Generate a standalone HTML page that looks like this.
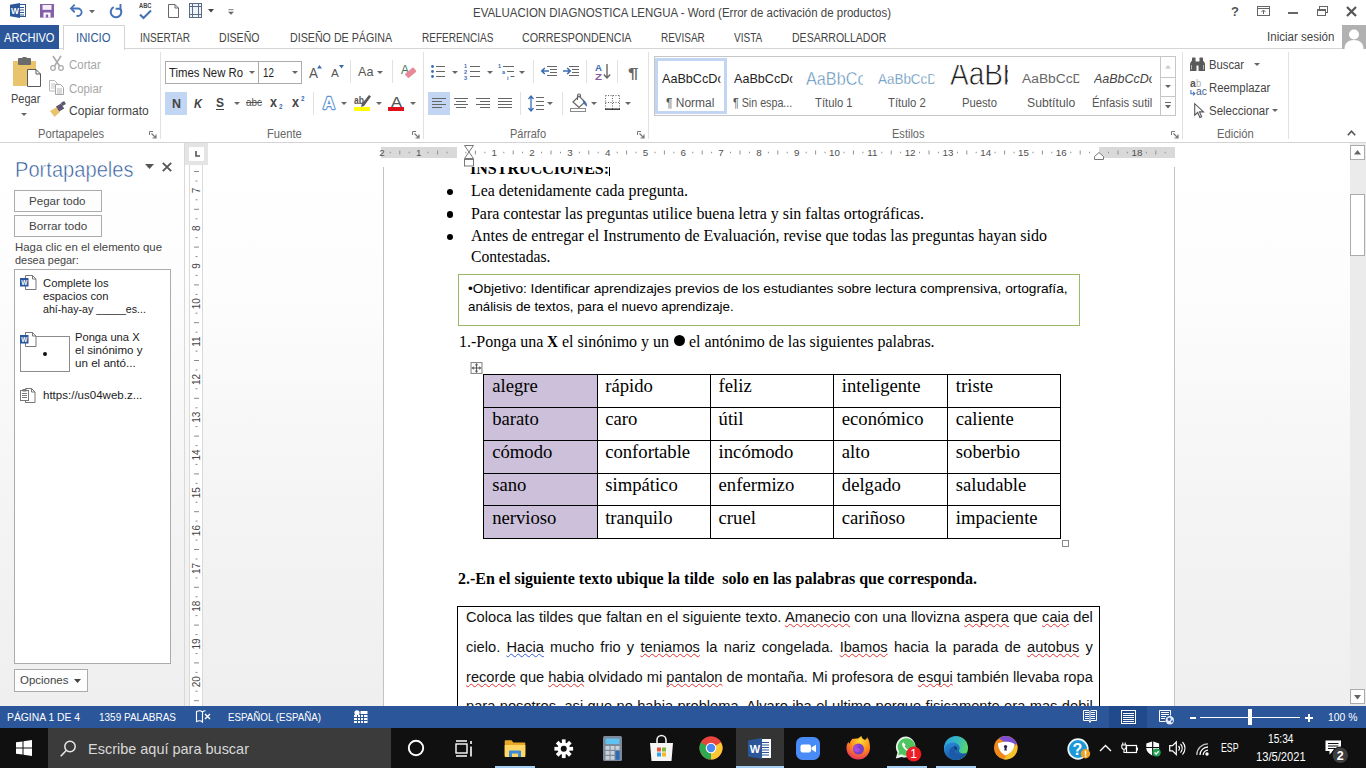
<!DOCTYPE html>
<html lang="es"><head><meta charset="utf-8"><title>EVALUACION DIAGNOSTICA LENGUA - Word</title><style>
html,body{margin:0;padding:0}
body{width:1366px;height:768px;overflow:hidden;background:#fff;position:relative;font-family:"Liberation Sans","DejaVu Sans",sans-serif}
.a{position:absolute;box-sizing:border-box}
.t{white-space:pre;display:block;transform-origin:0 0}
svg{overflow:visible}
</style></head><body>
<div class="a" style="left:0px;top:143px;width:1366px;height:563px;background:linear-gradient(#ffffff 0%,#fdfdfd 25%,#f3f3f3 70%,#efefef 100%);"></div>
<div class="a" style="left:0px;top:142px;width:1366px;height:1px;background:#d4d4d4;"></div>
<span class="a t" id="t1" style="left:473px;top:6.84px;font: 400 12px/12px 'Liberation Sans','DejaVu Sans',sans-serif;color:#444;transform:scaleX(0.9564);">EVALUACION DIAGNOSTICA LENGUA - Word (Error de activación de productos)</span>
<div class="a" style="left:0px;top:25px;width:59px;height:24px;background:#2b579a;"></div>
<span class="a t" id="t2" style="left:4px;top:31.84px;font: 400 12px/12px 'Liberation Sans','DejaVu Sans',sans-serif;color:#fff;transform:scaleX(0.9234);">ARCHIVO</span>
<div class="a" style="left:59px;top:48px;width:1307px;height:1px;background:#d4d4d4;"></div>
<div class="a" style="left:63px;top:25px;width:62px;height:25px;background:#fff;border:1px solid #d4d4d4;border-bottom:none;"></div>
<span class="a t" id="t3" style="left:76px;top:31.84px;font: 400 12px/12px 'Liberation Sans','DejaVu Sans',sans-serif;color:#2b579a;transform:scaleX(0.9408);">INICIO</span>
<span class="a t" id="t4" style="left:140px;top:31.84px;font: 400 12px/12px 'Liberation Sans','DejaVu Sans',sans-serif;color:#444;transform:scaleX(0.8392);">INSERTAR</span>
<span class="a t" id="t5" style="left:219px;top:31.84px;font: 400 12px/12px 'Liberation Sans','DejaVu Sans',sans-serif;color:#444;transform:scaleX(0.8801);">DISEÑO</span>
<span class="a t" id="t6" style="left:289.5px;top:31.84px;font: 400 12px/12px 'Liberation Sans','DejaVu Sans',sans-serif;color:#444;transform:scaleX(0.8893);">DISEÑO DE PÁGINA</span>
<span class="a t" id="t7" style="left:421.5px;top:31.84px;font: 400 12px/12px 'Liberation Sans','DejaVu Sans',sans-serif;color:#444;transform:scaleX(0.8376);">REFERENCIAS</span>
<span class="a t" id="t8" style="left:522px;top:31.84px;font: 400 12px/12px 'Liberation Sans','DejaVu Sans',sans-serif;color:#444;transform:scaleX(0.8925);">CORRESPONDENCIA</span>
<span class="a t" id="t9" style="left:661px;top:31.84px;font: 400 12px/12px 'Liberation Sans','DejaVu Sans',sans-serif;color:#444;transform:scaleX(0.8313);">REVISAR</span>
<span class="a t" id="t10" style="left:734.4px;top:31.84px;font: 400 12px/12px 'Liberation Sans','DejaVu Sans',sans-serif;color:#444;transform:scaleX(0.8374);">VISTA</span>
<span class="a t" id="t11" style="left:792.4px;top:31.84px;font: 400 12px/12px 'Liberation Sans','DejaVu Sans',sans-serif;color:#444;transform:scaleX(0.8782);">DESARROLLADOR</span>
<span class="a t" id="t12" style="left:1267px;top:30.84px;font: 400 12px/12px 'Liberation Sans','DejaVu Sans',sans-serif;color:#444;transform:scaleX(0.9624);">Iniciar sesión</span>
<div class="a" style="left:1342px;top:25px;width:24px;height:24px;background:#b1b1b1;"></div>
<svg class="a" style="left:1342px;top:25px;" width="24" height="24" viewBox="0 0 24 24"><circle cx="12" cy="9.5" r="5" fill="#fff"/><path d="M2.5 24c0-6 4-9 9.5-9s9.500 3 9.500 9z" fill="#fff"/></svg>
<div class="a" style="left:0px;top:706px;width:1366px;height:22px;background:#2b579a;"></div>
<div class="a" style="left:0px;top:728px;width:1366px;height:40px;background:#101010;"></div>
<div class="a" style="left:48px;top:728px;width:343px;height:40px;background:#3b3b3b;"></div>
<svg class="a" style="left:10px;top:3px;" width="16" height="15" viewBox="0 0 16 15"><rect x="8" y="1.500" width="7.500" height="12" fill="#fff" stroke="#2b579a" stroke-width="1"/><path d="M10 4.500h4M10 7h4M10 9.500h4M10 12h4" stroke="#2b579a" stroke-width="1"/><path d="M0 1.800l10-1.800v15l-10-1.800z" fill="#2b579a"/><text x="5" y="11" font-family="Liberation Sans,sans-serif" font-weight="700" font-size="8.500" fill="#fff" text-anchor="middle">W</text></svg>
<svg class="a" style="left:40px;top:4px;" width="14" height="14" viewBox="0 0 14 14"><rect x="0" y="0" width="14" height="13.600" fill="#8560a8"/><rect x="2.500" y="1" width="9" height="4.800" fill="#f6eef9"/><rect x="3.500" y="8.500" width="7" height="5.100" fill="#fff"/><rect x="5.800" y="10.500" width="2.400" height="3.100" fill="#8560a8"/></svg>
<svg class="a" style="left:69px;top:4px;" width="15" height="13" viewBox="0 0 15 14.500"><path d="M1.500 5h7.500a4.200 4.200 0 0 1 0 8.400h-1.500" fill="none" stroke="#4673b7" stroke-width="2"/><path d="M5.500 0.800L1.300 5l4.200 4.200" fill="none" stroke="#4673b7" stroke-width="2"/></svg>
<svg class="a" style="left:88.5px;top:9.5px;" width="6" height="4" viewBox="0 0 6 4"><path d="M0 0h6l-3 3.200z" fill="#666"/></svg>
<svg class="a" style="left:109px;top:4px;" width="14" height="14" viewBox="0 0 14 14"><path d="M10.700 4.200A5.300 5.300 0 1 1 4.800 3.200" fill="none" stroke="#4673b7" stroke-width="2"/><path d="M6.600 4.700h4.900v-4.700" fill="none" stroke="#4673b7" stroke-width="1.900"/></svg>
<span class="a t" id="t13" style="left:139px;top:2.70px;font: 700 6.5px/6.5px 'Liberation Sans','DejaVu Sans',sans-serif;color:#444;transform:scaleX(0.8869);">ABC</span>
<svg class="a" style="left:139px;top:9.5px;" width="13" height="9" viewBox="0 0 13 9"><path d="M1 4.500l3.500 3.500l7.500-7.500" fill="none" stroke="#4673b7" stroke-width="2.100"/></svg>
<svg class="a" style="left:168px;top:4px;" width="11" height="14" viewBox="0 0 11 14"><path d="M0.500 0.500h6.500l3.500 3.500v9.500h-10z" fill="#fff" stroke="#666" stroke-width="1"/><path d="M7 0.500v3.500h3.500" fill="none" stroke="#666" stroke-width="1"/></svg>
<svg class="a" style="left:189px;top:3px;" width="13" height="15" viewBox="0 0 13 15"><rect x="0.500" y="0.500" width="12" height="14" fill="#eef4fa" stroke="#5a6b85" stroke-width="1"/><path d="M0.500 3.500h12M0.500 11.500h12M3.500 0.500v14M9.500 0.500v14" stroke="#5a6b85" stroke-width="1" fill="none"/></svg>
<svg class="a" style="left:208px;top:9px;" width="6" height="4" viewBox="0 0 6 4"><path d="M0 0h6l-3 3.500z" fill="#444"/></svg>
<svg class="a" style="left:227.5px;top:8.5px;" width="6" height="6.5" viewBox="0 0 7 7"><path d="M0.500 0.500h6" stroke="#666" stroke-width="1"/><path d="M0 3h7l-3.500 3.500z" fill="#666"/></svg>
<span class="a t" id="t14" style="left:1231px;top:4.50px;font: 700 13px/13px 'Liberation Sans','DejaVu Sans',sans-serif;color:#555;">?</span>
<svg class="a" style="left:1257px;top:6px;" width="13" height="10" viewBox="0 0 13 10"><rect x="0.500" y="0.500" width="12" height="9" fill="none" stroke="#666" stroke-width="1"/><path d="M0.500 2.500h12" stroke="#666"/><path d="M6.500 8V4.500M4.500 6l2-2l2 2" fill="none" stroke="#666" stroke-width="1"/></svg>
<div class="a" style="left:1288px;top:12px;width:10px;height:2px;background:#666;"></div>
<svg class="a" style="left:1317px;top:6px;" width="11" height="10" viewBox="0 0 11 10"><rect x="2.500" y="0.500" width="8" height="6" fill="none" stroke="#666"/><rect x="0.500" y="3.500" width="8" height="6" fill="#fff" stroke="#666"/><path d="M0.500 4.500h8" stroke="#666"/></svg>
<svg class="a" style="left:1346px;top:6px;" width="11" height="11" viewBox="0 0 11 11"><path d="M1 1l9 9M10 1l-9 9" stroke="#555" stroke-width="2.200"/></svg>
<svg class="a" style="left:12px;top:57px;" width="30" height="31" viewBox="0 0 30 31"><rect x="1" y="4" width="23" height="25" fill="#e9c46c"/><rect x="6" y="1" width="13" height="7" rx="1" fill="#6b6b6b"/><rect x="10.500" y="0" width="4" height="3" fill="#6b6b6b"/><path d="M15.500 12.500h8.500l4.500 4.500v12.500h-13z" fill="#fff" stroke="#5a5a5a" stroke-width="1"/><path d="M24 12.500v4.500h4.500" fill="none" stroke="#5a5a5a"/></svg>
<span class="a t" id="t15" style="left:10.5px;top:92.72px;font: 400 12.5px/12.5px 'Liberation Sans','DejaVu Sans',sans-serif;color:#444;transform:scaleX(0.8783);">Pegar</span>
<svg class="a" style="left:21px;top:113px;" width="6" height="4" viewBox="0 0 6 4"><path d="M0 0h6l-3 3z" fill="#666"/></svg>
<svg class="a" style="left:50px;top:56px;" width="14" height="15" viewBox="0 0 14 15"><path d="M3 0l6.500 10M11 0l-6.500 10" stroke="#ababab" stroke-width="1.600" fill="none"/><circle cx="3" cy="12" r="2.300" fill="none" stroke="#ababab" stroke-width="1.300"/><circle cx="11" cy="12" r="2.300" fill="none" stroke="#ababab" stroke-width="1.300"/></svg>
<span class="a t" id="t16" style="left:69px;top:59.32px;font: 400 12.5px/12.5px 'Liberation Sans','DejaVu Sans',sans-serif;color:#a6a6a6;transform:scaleX(0.9155);">Cortar</span>
<svg class="a" style="left:49px;top:80px;" width="16" height="15" viewBox="0 0 16 15"><path d="M0.500 0.500h5l2.500 2.500v8h-7.500z" fill="#fff" stroke="#b5b5b5"/><path d="M2 4h4M2 6h4M2 8h4" stroke="#c4c4c4"/><path d="M6.500 4.500h5l3 3v7h-8z" fill="#fff" stroke="#a6a6a6"/><path d="M8 9h5M8 11h5M8 13h5" stroke="#b5b5b5"/></svg>
<span class="a t" id="t17" style="left:69px;top:82.52px;font: 400 12.5px/12.5px 'Liberation Sans','DejaVu Sans',sans-serif;color:#a6a6a6;transform:scaleX(0.9096);">Copiar</span>
<svg class="a" style="left:50px;top:102px;" width="16" height="15" viewBox="0 0 16 15"><path d="M0 9l7-4l3 5l-5.500 5z" fill="#e9c46c"/><path d="M6 4.500l5-3l3.200 5l-5 3z" fill="#5c5470"/><rect x="11.500" y="0" width="4" height="3.500" transform="rotate(-30 13 2)" fill="#5c5470"/></svg>
<span class="a t" id="t18" style="left:69px;top:105.02px;font: 400 12.5px/12.5px 'Liberation Sans','DejaVu Sans',sans-serif;color:#444;transform:scaleX(0.9639);">Copiar formato</span>
<span class="a t" id="t19" style="left:38.3px;top:128.44px;font: 400 12px/12px 'Liberation Sans','DejaVu Sans',sans-serif;color:#666;transform:scaleX(0.9347);">Portapapeles</span>
<svg class="a" style="left:149px;top:131px;" width="8" height="8" viewBox="0 0 8 8"><path d="M0.500 4V0.500H4" fill="none" stroke="#777"/><path d="M2.500 2.500L7 7M7 3.500V7H3.500" fill="none" stroke="#777" stroke-width="1.200"/></svg>
<div class="a" style="left:160px;top:52px;width:1px;height:87px;background:#e1e1e1;"></div>
<div class="a" style="left:165px;top:61px;width:94px;height:23px;background:#fff;border:1px solid #ababab;"></div>
<div class="a" style="left:258px;top:61px;width:44px;height:23px;background:#fff;border:1px solid #ababab;"></div>
<span class="a t" id="t20" style="left:168.7px;top:66.52px;font: 400 12.5px/12.5px 'Liberation Sans','DejaVu Sans',sans-serif;color:#222;transform:scaleX(0.9080);">Times New Ro</span>
<svg class="a" style="left:248.5px;top:71px;" width="6" height="4" viewBox="0 0 6 4"><path d="M0 0h6l-3 3z" fill="#666"/></svg>
<span class="a t" id="t21" style="left:262.7px;top:66.52px;font: 400 12.5px/12.5px 'Liberation Sans','DejaVu Sans',sans-serif;color:#222;transform:scaleX(0.7838);">12</span>
<svg class="a" style="left:291.5px;top:71px;" width="6" height="4" viewBox="0 0 6 4"><path d="M0 0h6l-3 3z" fill="#666"/></svg>
<span class="a t" id="t22" style="left:308.5px;top:65.10px;font: 400 15px/15px 'Liberation Sans','DejaVu Sans',sans-serif;color:#555;transform:scaleX(0.8986);">A</span>
<svg class="a" style="left:317px;top:64.5px;" width="5" height="3.5" viewBox="0 0 5 3.500"><path d="M0 3.500h5l-2.500-3.500z" fill="#3b6cb3"/></svg>
<span class="a t" id="t23" style="left:331px;top:68.07px;font: 400 11.5px/11.5px 'Liberation Sans','DejaVu Sans',sans-serif;color:#555;transform:scaleX(1.0167);">A</span>
<svg class="a" style="left:338.5px;top:64.5px;" width="5" height="3.5" viewBox="0 0 5 3.500"><path d="M0 0h5l-2.500 3.500z" fill="#3b6cb3"/></svg>
<div class="a" style="left:350px;top:60px;width:1px;height:23px;background:#e1e1e1;"></div>
<span class="a t" id="t24" style="left:358px;top:65.30px;font: 400 13px/13px 'Liberation Sans','DejaVu Sans',sans-serif;color:#555;transform:scaleX(0.9682);">Aa</span>
<svg class="a" style="left:377px;top:71px;" width="6" height="4" viewBox="0 0 6 4"><path d="M0 0h6l-3 3z" fill="#666"/></svg>
<div class="a" style="left:392px;top:60px;width:1px;height:23px;background:#e1e1e1;"></div>
<span class="a t" id="t25" style="left:401px;top:63.84px;font: 400 12px/12px 'Liberation Sans','DejaVu Sans',sans-serif;color:#3d7a5a;transform:scaleX(0.9981);">A</span>
<svg class="a" style="left:404px;top:66px;" width="13" height="13" viewBox="0 0 13 13"><rect x="1" y="4" width="11" height="5.500" rx="1" transform="rotate(-40 6.500 6.500)" fill="#e8899a"/></svg>
<div class="a" style="left:165px;top:92px;width:22px;height:23px;background:#c2d5f2;"></div>
<span class="a t" id="t26" style="left:171.5px;top:96.50px;font: 700 13px/13px 'Liberation Sans','DejaVu Sans',sans-serif;color:#444;transform:scaleX(0.9584);">N</span>
<span class="a t" id="t27" style="left:193.5px;top:96.50px;font:italic 700 13px/13px 'Liberation Sans','DejaVu Sans',sans-serif;color:#444;transform:scaleX(0.8519);">K</span>
<span class="a t" id="t28" style="left:216px;top:95.50px;font: 700 13px/13px 'Liberation Sans','DejaVu Sans',sans-serif;color:#444;transform:scaleX(0.9225);">S</span>
<div class="a" style="left:216px;top:108.5px;width:8px;height:1.5px;background:#444;"></div>
<svg class="a" style="left:233.5px;top:102px;" width="6" height="4" viewBox="0 0 6 4"><path d="M0 0h6l-3 3z" fill="#666"/></svg>
<span class="a t" id="t29" style="left:246px;top:97.27px;font: 400 11.5px/11.5px 'Liberation Sans','DejaVu Sans',sans-serif;color:#555;transform:scaleX(0.8627);text-decoration:line-through;">abc</span>
<span class="a t" id="t30" style="left:270px;top:95.45px;font: 700 14px/14px 'Liberation Sans','DejaVu Sans',sans-serif;color:#444;transform:scaleX(0.8978);">x</span>
<span class="a t" id="t31" style="left:278.5px;top:104.00px;font: 700 6.5px/6.5px 'Liberation Sans','DejaVu Sans',sans-serif;color:#3b6cb3;transform:scaleX(0.9655);">2</span>
<span class="a t" id="t32" style="left:292px;top:95.45px;font: 700 14px/14px 'Liberation Sans','DejaVu Sans',sans-serif;color:#444;transform:scaleX(0.8978);">x</span>
<span class="a t" id="t33" style="left:300.5px;top:95.50px;font: 700 6.5px/6.5px 'Liberation Sans','DejaVu Sans',sans-serif;color:#3b6cb3;transform:scaleX(0.9655);">2</span>
<div class="a" style="left:313px;top:92px;width:1px;height:23px;background:#e1e1e1;"></div>
<svg class="a" style="left:320px;top:93px;" width="18" height="19" viewBox="0 0 18 19"><text x="9" y="15.800" font-family="Liberation Sans,sans-serif" font-size="16.500" font-weight="700" text-anchor="middle" fill="#fff" stroke="#5f94d6" stroke-width="2.300" stroke-linejoin="round" paint-order="stroke">A</text></svg>
<svg class="a" style="left:340.5px;top:102px;" width="6" height="4" viewBox="0 0 6 4"><path d="M0 0h6l-3 3z" fill="#666"/></svg>
<span class="a t" id="t34" style="left:354px;top:95.11px;font: 700 10.5px/10.5px 'Liberation Sans','DejaVu Sans',sans-serif;color:#555;transform:scaleX(0.8153);">ab</span>
<svg class="a" style="left:360px;top:95px;" width="11" height="12" viewBox="0 0 11 12"><path d="M9 0l2 1.500l-7 9.500l-3 1l0.800-3z" fill="#5a5a5a"/></svg>
<div class="a" style="left:354px;top:107px;width:16px;height:4px;background:#ffff00;"></div>
<svg class="a" style="left:375.5px;top:102px;" width="6" height="4" viewBox="0 0 6 4"><path d="M0 0h6l-3 3z" fill="#666"/></svg>
<span class="a t" id="t35" style="left:390.5px;top:94.65px;font: 400 14px/14px 'Liberation Sans','DejaVu Sans',sans-serif;color:#555;transform:scaleX(1.1773);">A</span>
<div class="a" style="left:388px;top:107px;width:16px;height:4px;background:#e0101a;"></div>
<svg class="a" style="left:409.5px;top:102px;" width="6" height="4" viewBox="0 0 6 4"><path d="M0 0h6l-3 3z" fill="#666"/></svg>
<span class="a t" id="t36" style="left:266.6px;top:128.44px;font: 400 12px/12px 'Liberation Sans','DejaVu Sans',sans-serif;color:#666;transform:scaleX(0.9315);">Fuente</span>
<svg class="a" style="left:412px;top:131px;" width="8" height="8" viewBox="0 0 8 8"><path d="M0.500 4V0.500H4" fill="none" stroke="#777"/><path d="M2.500 2.500L7 7M7 3.500V7H3.500" fill="none" stroke="#777" stroke-width="1.200"/></svg>
<div class="a" style="left:423px;top:52px;width:1px;height:87px;background:#e1e1e1;"></div>
<svg class="a" style="left:431px;top:64px;" width="15" height="15" viewBox="0 0 15 15"><circle cx="1.500" cy="2.500" r="1.400" fill="#3b6cb3"/><circle cx="1.500" cy="7.500" r="1.400" fill="#3b6cb3"/><circle cx="1.500" cy="12.500" r="1.400" fill="#3b6cb3"/><path d="M5 2.500h9M5 7.500h9M5 12.500h9" stroke="#666" stroke-width="1"/></svg>
<svg class="a" style="left:452px;top:71px;" width="6" height="4" viewBox="0 0 6 4"><path d="M0 0h6l-3 3z" fill="#666"/></svg>
<svg class="a" style="left:464px;top:63px;" width="17" height="17" viewBox="0 0 17 17"><text x="0" y="5" font-size="5.500" font-weight="700" font-family="Liberation Sans,sans-serif" fill="#3b6cb3">1</text><text x="0" y="10.800" font-size="5.500" font-weight="700" font-family="Liberation Sans,sans-serif" fill="#3b6cb3">2</text><text x="0" y="16.500" font-size="5.500" font-weight="700" font-family="Liberation Sans,sans-serif" fill="#3b6cb3">3</text><path d="M6 3.500h10M6 8.500h10M6 13.500h10" stroke="#666" stroke-width="1"/></svg>
<svg class="a" style="left:486.5px;top:71px;" width="6" height="4" viewBox="0 0 6 4"><path d="M0 0h6l-3 3z" fill="#666"/></svg>
<svg class="a" style="left:498px;top:63px;" width="18" height="17" viewBox="0 0 18 17"><text x="0" y="5" font-size="5.500" font-weight="700" font-family="Liberation Sans,sans-serif" fill="#3b6cb3">1</text><text x="4" y="10.800" font-size="5.500" font-weight="700" font-family="Liberation Sans,sans-serif" fill="#3b6cb3">a</text><text x="9" y="16.500" font-size="5.500" font-weight="700" font-family="Liberation Sans,sans-serif" fill="#3b6cb3">i</text><path d="M5 3.500h11M9 8.500h7M12.500 13.500h4" stroke="#666" stroke-width="1"/></svg>
<svg class="a" style="left:518.5px;top:71px;" width="6" height="4" viewBox="0 0 6 4"><path d="M0 0h6l-3 3z" fill="#666"/></svg>
<div class="a" style="left:533px;top:60px;width:1px;height:23px;background:#e1e1e1;"></div>
<svg class="a" style="left:541px;top:65px;" width="16" height="13" viewBox="0 0 16 13"><path d="M6 1.500h10M9 4.500h7M9 7.500h7M6 10.500h10" stroke="#666" stroke-width="1"/><path d="M8 6H1M3.800 3l-3 3l3 3" fill="none" stroke="#3b6cb3" stroke-width="1.600"/></svg>
<svg class="a" style="left:563px;top:65px;" width="16" height="13" viewBox="0 0 16 13"><path d="M6 1.500h10M9 4.500h7M9 7.500h7M6 10.500h10" stroke="#666" stroke-width="1"/><path d="M0 6H7M4.200 3l3 3l-3 3" fill="none" stroke="#3b6cb3" stroke-width="1.600"/></svg>
<div class="a" style="left:586px;top:60px;width:1px;height:23px;background:#e1e1e1;"></div>
<span class="a t" id="t37" style="left:595px;top:63.46px;font: 700 9.5px/9.5px 'Liberation Sans','DejaVu Sans',sans-serif;color:#3b6cb3;transform:scaleX(1.0182);">A</span>
<span class="a t" id="t38" style="left:595px;top:71.96px;font: 700 9.5px/9.5px 'Liberation Sans','DejaVu Sans',sans-serif;color:#8a5a9a;transform:scaleX(1.2043);">Z</span>
<svg class="a" style="left:603px;top:64px;" width="8" height="16" viewBox="0 0 8 16"><path d="M4 0v14M0.800 10.500l3.200 3.500l3.200-3.500" fill="none" stroke="#666" stroke-width="1.400"/></svg>
<div class="a" style="left:617px;top:60px;width:1px;height:23px;background:#e1e1e1;"></div>
<span class="a t" id="t39" style="left:627.5px;top:64.80px;font: 700 15px/15px 'Liberation Sans','DejaVu Sans',sans-serif;color:#666;transform:scaleX(1.2584);">¶</span>
<div class="a" style="left:428px;top:92px;width:22px;height:23px;background:#c2d5f2;"></div>
<svg class="a" style="left:432px;top:97px;" width="14" height="12" viewBox="0 0 14 12"><path d="M0 1.500h14M0 4.500h10M0 7.500h14M0 10.500h10" stroke="#666" stroke-width="1"/></svg>
<svg class="a" style="left:454px;top:97px;" width="14" height="12" viewBox="0 0 14 12"><path d="M0 1.500h14M2 4.500h10M0 7.500h14M2 10.500h10" stroke="#666" stroke-width="1"/></svg>
<svg class="a" style="left:476px;top:97px;" width="14" height="12" viewBox="0 0 14 12"><path d="M0 1.500h14M4 4.500h10M0 7.500h14M4 10.500h10" stroke="#666" stroke-width="1"/></svg>
<svg class="a" style="left:498px;top:97px;" width="14" height="12" viewBox="0 0 14 12"><path d="M0 1.500h14M0 4.500h14M0 7.500h14M0 10.500h14" stroke="#666" stroke-width="1"/></svg>
<div class="a" style="left:520px;top:92px;width:1px;height:23px;background:#e1e1e1;"></div>
<svg class="a" style="left:528px;top:95px;" width="16" height="17" viewBox="0 0 16 17"><path d="M3 1v15M0.500 4l2.500-3l2.500 3M0.500 13l2.500 3l2.500-3" fill="none" stroke="#3b6cb3" stroke-width="1.300"/><path d="M8 2.500h8M8 6.500h8M8 10.500h8M8 14.500h8" stroke="#666" stroke-width="1"/></svg>
<svg class="a" style="left:547px;top:102px;" width="6" height="4" viewBox="0 0 6 4"><path d="M0 0h6l-3 3z" fill="#666"/></svg>
<div class="a" style="left:562px;top:92px;width:1px;height:23px;background:#e1e1e1;"></div>
<svg class="a" style="left:570px;top:94px;" width="17" height="18" viewBox="0 0 17 18"><path d="M3 8l6-6l6 6l-6 5.500z" fill="#fff" stroke="#666" stroke-width="1.200"/><path d="M7.500 6V1.500a1.500 1.500 0 0 1 3 0V4" fill="none" stroke="#666" stroke-width="1.100"/><path d="M13 6.500c2.500 1 3.500 3 3.500 5.500c-1.500-1-2.500-3-3.500-5.500z" fill="#3b6cb3" stroke="#3b6cb3"/><rect x="0.500" y="14.500" width="15" height="3" fill="#fff" stroke="#8a8a8a"/></svg>
<svg class="a" style="left:591px;top:102px;" width="6" height="4" viewBox="0 0 6 4"><path d="M0 0h6l-3 3z" fill="#666"/></svg>
<svg class="a" style="left:605px;top:95px;" width="15" height="15" viewBox="0 0 15 15"><path d="M0.500 0.500h14M0.500 7.500h14M0.500 0.500v14M7.500 0.500v14M14.500 0.500v14" fill="none" stroke="#666" stroke-width="1" stroke-dasharray="1 1.500"/><path d="M0 14.200h15" stroke="#444" stroke-width="1.600"/></svg>
<svg class="a" style="left:625px;top:102px;" width="6" height="4" viewBox="0 0 6 4"><path d="M0 0h6l-3 3z" fill="#666"/></svg>
<span class="a t" id="t40" style="left:509.6px;top:128.44px;font: 400 12px/12px 'Liberation Sans','DejaVu Sans',sans-serif;color:#666;transform:scaleX(0.9146);">Párrafo</span>
<svg class="a" style="left:637px;top:131px;" width="8" height="8" viewBox="0 0 8 8"><path d="M0.500 4V0.500H4" fill="none" stroke="#777"/><path d="M2.500 2.500L7 7M7 3.500V7H3.500" fill="none" stroke="#777" stroke-width="1.200"/></svg>
<div class="a" style="left:648px;top:52px;width:1px;height:87px;background:#e1e1e1;"></div>
<div class="a" style="left:654px;top:56px;width:522px;height:60px;background:#fff;border:1px solid #c6c6c6;"></div>
<div class="a" style="left:655px;top:58px;width:72px;height:56px;background:#fff;border:3px solid #c2d5f2;"></div>
<span class="a t" id="t41" style="left:661.8px;top:71.87px;font: 400 13.5px/13.5px 'Liberation Sans','DejaVu Sans',sans-serif;color:#222;transform:scaleX(0.9344);clip-path:inset(-5px 3.500px -5px 0);">AaBbCcDc</span>
<span class="a t" id="t42" style="left:666.3px;top:97.42px;font: 400 12.5px/12.5px 'Liberation Sans','DejaVu Sans',sans-serif;color:#555;transform:scaleX(0.9567);">¶ Normal</span>
<span class="a t" id="t43" style="left:733.6px;top:71.87px;font: 400 13.5px/13.5px 'Liberation Sans','DejaVu Sans',sans-serif;color:#222;transform:scaleX(0.9329);clip-path:inset(-5px 3.500px -5px 0);">AaBbCcDc</span>
<span class="a t" id="t44" style="left:733px;top:97.42px;font: 400 12.5px/12.5px 'Liberation Sans','DejaVu Sans',sans-serif;color:#555;transform:scaleX(0.8561);">¶ Sin espa...</span>
<span class="a t" id="t45" style="left:806px;top:69.22px;font: 400 19px/19px 'Liberation Sans','DejaVu Sans',sans-serif;color:#4e86b4;transform:scaleX(0.8536);clip-path:inset(-5px 3px -5px 0);-webkit-text-stroke:0.500px #fff;">AaBbCc</span>
<span class="a t" id="t46" style="left:815.4px;top:97.42px;font: 400 12.5px/12.5px 'Liberation Sans','DejaVu Sans',sans-serif;color:#555;transform:scaleX(0.9019);">Título 1</span>
<span class="a t" id="t47" style="left:878px;top:70.68px;font: 400 15.5px/15.5px 'Liberation Sans','DejaVu Sans',sans-serif;color:#4e86b4;transform:scaleX(0.8669);clip-path:inset(-5px 3px -5px 0);-webkit-text-stroke:0.350px #fff;">AaBbCcD</span>
<span class="a t" id="t48" style="left:887.8px;top:97.42px;font: 400 12.5px/12.5px 'Liberation Sans','DejaVu Sans',sans-serif;color:#555;transform:scaleX(0.9091);">Título 2</span>
<div class="a" style="left:944px;top:65px;width:64px;height:30px;overflow:hidden;"><span class="a t" style="left:5.500px;top:-7.63px;font:400 33px/33px 'Liberation Sans','DejaVu Sans',sans-serif;color:#1a1a1a;transform:scaleX(0.85);-webkit-text-stroke:0.800px #fff">AaBb</span></div>
<span class="a t" id="t49" style="left:961.5px;top:97.42px;font: 400 12.5px/12.5px 'Liberation Sans','DejaVu Sans',sans-serif;color:#555;transform:scaleX(0.8992);">Puesto</span>
<span class="a t" id="t50" style="left:1021.9px;top:72.72px;font: 400 12.5px/12.5px 'Liberation Sans','DejaVu Sans',sans-serif;color:#666;transform:scaleX(1.1040);clip-path:inset(-5px 3px -5px 0);">AaBbCcD</span>
<span class="a t" id="t51" style="left:1026.8px;top:97.42px;font: 400 12.5px/12.5px 'Liberation Sans','DejaVu Sans',sans-serif;color:#555;transform:scaleX(0.9768);">Subtítulo</span>
<span class="a t" id="t52" style="left:1093.9px;top:72.30px;font:italic 400 13px/13px 'Liberation Sans','DejaVu Sans',sans-serif;color:#444;transform:scaleX(0.9610);clip-path:inset(-5px 3.500px -5px 0);">AaBbCcDc</span>
<span class="a t" id="t53" style="left:1092.4px;top:97.42px;font: 400 12.5px/12.5px 'Liberation Sans','DejaVu Sans',sans-serif;color:#555;transform:scaleX(0.9040);">Énfasis sutil</span>
<div class="a" style="left:1160px;top:56px;width:16px;height:60px;background:#fff;border:1px solid #c6c6c6;"></div>
<div class="a" style="left:1160px;top:77px;width:16px;height:1px;background:#c6c6c6;"></div>
<div class="a" style="left:1160px;top:96px;width:16px;height:1px;background:#c6c6c6;"></div>
<svg class="a" style="left:1165px;top:64.5px;" width="6" height="4" viewBox="0 0 6 4"><path d="M0 3.500h6l-3-3.500z" fill="#c8c8c8"/></svg>
<svg class="a" style="left:1165px;top:85px;" width="6" height="4" viewBox="0 0 6 4"><path d="M0 0h6l-3 3z" fill="#666"/></svg>
<svg class="a" style="left:1165px;top:102px;" width="6" height="8" viewBox="0 0 6 8"><path d="M0 0.500h6" stroke="#666"/><path d="M0 3h6l-3 3.500z" fill="#666"/></svg>
<span class="a t" id="t54" style="left:891.5px;top:128.44px;font: 400 12px/12px 'Liberation Sans','DejaVu Sans',sans-serif;color:#666;transform:scaleX(0.9195);">Estilos</span>
<svg class="a" style="left:1171px;top:131px;" width="8" height="8" viewBox="0 0 8 8"><path d="M0.500 4V0.500H4" fill="none" stroke="#777"/><path d="M2.500 2.500L7 7M7 3.500V7H3.500" fill="none" stroke="#777" stroke-width="1.200"/></svg>
<div class="a" style="left:1182px;top:52px;width:1px;height:87px;background:#e1e1e1;"></div>
<svg class="a" style="left:1190px;top:57px;" width="15" height="14" viewBox="0 0 15 14"><path d="M0 6.500l1.500-2.500h4l1 2.500v7.500h-6.500z" fill="#5a5a5a"/><path d="M15 6.500l-1.500-2.500h-4l-1 2.500v7.500h6.500z" fill="#5a5a5a"/><rect x="2" y="0.500" width="3.500" height="4.500" rx="0.800" fill="#5a5a5a"/><rect x="9.500" y="0.500" width="3.500" height="4.500" rx="0.800" fill="#5a5a5a"/><rect x="6" y="4.500" width="3" height="4" fill="#5a5a5a"/><path d="M1.500 8v4.500M13.500 8v4.500" stroke="#fff" stroke-width="0.800" opacity="0.700"/></svg>
<span class="a t" id="t55" style="left:1208.7px;top:58.72px;font: 400 12.5px/12.5px 'Liberation Sans','DejaVu Sans',sans-serif;color:#444;transform:scaleX(0.9022);">Buscar</span>
<svg class="a" style="left:1253.5px;top:63px;" width="6" height="4" viewBox="0 0 6 4"><path d="M0 0h6l-3 3z" fill="#666"/></svg>
<span class="a t" id="t56" style="left:1190px;top:78.41px;font: 700 10.5px/10.5px 'Liberation Sans','DejaVu Sans',sans-serif;color:#555;transform:scaleX(0.9925);">a</span>
<span class="a t" id="t57" style="left:1196.3px;top:78.41px;font: 400 10.5px/10.5px 'Liberation Sans','DejaVu Sans',sans-serif;color:#b0b0b0;transform:scaleX(0.8898);">b</span>
<span class="a t" id="t58" style="left:1195.5px;top:86.11px;font: 400 10.5px/10.5px 'Liberation Sans','DejaVu Sans',sans-serif;color:#46618c;transform:scaleX(0.9915);">ac</span>
<svg class="a" style="left:1189.5px;top:89.5px;" width="5.5" height="5.5" viewBox="0 0 6 6"><path d="M1 0v4h4M3.500 2l1.700 2l-1.700 2" fill="none" stroke="#3b6cb3" stroke-width="1.100"/></svg>
<span class="a t" id="t59" style="left:1208.7px;top:82.32px;font: 400 12.5px/12.5px 'Liberation Sans','DejaVu Sans',sans-serif;color:#444;transform:scaleX(0.9096);">Reemplazar</span>
<svg class="a" style="left:1194px;top:103px;" width="10" height="15" viewBox="0 0 10 15"><path d="M0.700 0.700v11.500l3-2.700l2.200 5l1.800-0.800l-2.200-4.800h4z" fill="#fff" stroke="#555" stroke-width="1.100"/></svg>
<span class="a t" id="t60" style="left:1208.7px;top:105.02px;font: 400 12.5px/12.5px 'Liberation Sans','DejaVu Sans',sans-serif;color:#444;transform:scaleX(0.9200);">Seleccionar</span>
<svg class="a" style="left:1271.5px;top:109px;" width="6" height="4" viewBox="0 0 6 4"><path d="M0 0h6l-3 3z" fill="#666"/></svg>
<span class="a t" id="t61" style="left:1216.5px;top:128.44px;font: 400 12px/12px 'Liberation Sans','DejaVu Sans',sans-serif;color:#666;transform:scaleX(0.9324);">Edición</span>
<div class="a" style="left:1288px;top:52px;width:1px;height:87px;background:#e1e1e1;"></div>
<svg class="a" style="left:1347px;top:130px;" width="9" height="6" viewBox="0 0 9 6"><path d="M0.800 5.200l3.700-4l3.700 4" fill="none" stroke="#555" stroke-width="1.600"/></svg>
<div class="a" style="left:184px;top:143px;width:1px;height:563px;background:#d9d9d9;"></div>
<span class="a t" id="t62" style="left:14.6px;top:159.80px;font: 400 21.5px/21.5px 'Liberation Sans','DejaVu Sans',sans-serif;color:#2b579a;transform:scaleX(0.9360);-webkit-text-stroke:0.550px #fff;">Portapapeles</span>
<svg class="a" style="left:145px;top:164px;" width="9" height="5" viewBox="0 0 9 5"><path d="M0 0h9l-4.500 5z" fill="#555"/></svg>
<svg class="a" style="left:162px;top:161.5px;" width="10" height="10" viewBox="0 0 10 10"><path d="M0.800 0.800l8.400 8.400M9.200 0.800l-8.400 8.400" stroke="#555" stroke-width="1.800"/></svg>
<div class="a" style="left:14px;top:190px;width:88px;height:22px;background:#fdfdfd;border:1px solid #ababab;"></div>
<span class="a t" id="t63" style="left:29.2px;top:195.97px;font: 400 11.5px/11.5px 'Liberation Sans','DejaVu Sans',sans-serif;color:#444;transform:scaleX(1.0042);">Pegar todo</span>
<div class="a" style="left:14px;top:215px;width:88px;height:22px;background:#fdfdfd;border:1px solid #ababab;"></div>
<span class="a t" id="t64" style="left:28.5px;top:220.97px;font: 400 11.5px/11.5px 'Liberation Sans','DejaVu Sans',sans-serif;color:#444;transform:scaleX(1.0134);">Borrar todo</span>
<span class="a t" id="t65" style="left:14.6px;top:241.77px;font: 400 11.5px/11.5px 'Liberation Sans','DejaVu Sans',sans-serif;color:#444;transform:scaleX(0.9910);">Haga clic en el elemento que</span>
<span class="a t" id="t66" style="left:14.6px;top:254.77px;font: 400 11.5px/11.5px 'Liberation Sans','DejaVu Sans',sans-serif;color:#444;transform:scaleX(0.9502);">desea pegar:</span>
<div class="a" style="left:14px;top:269px;width:157px;height:395px;background:#fff;border:1px solid #ababab;"></div>
<svg class="a" style="left:19.5px;top:275px;" width="17" height="15" viewBox="0 0 17 15"><path d="M5.500 0.500h7l3.500 3.500v10.500h-10.500z" fill="#fff" stroke="#777"/><path d="M12.500 0.500v3.500h3.500" fill="none" stroke="#777"/><rect x="0" y="3" width="8.500" height="8.500" fill="#2b579a"/><text x="4.250" y="10" font-family="Liberation Sans,sans-serif" font-weight="700" font-size="6.500" fill="#fff" text-anchor="middle">W</text></svg>
<span class="a t" id="t67" style="left:43px;top:277.97px;font: 400 11.5px/11.5px 'Liberation Sans','DejaVu Sans',sans-serif;color:#222;transform:scaleX(0.9788);">Complete los</span>
<span class="a t" id="t68" style="left:43px;top:290.97px;font: 400 11.5px/11.5px 'Liberation Sans','DejaVu Sans',sans-serif;color:#222;transform:scaleX(0.9758);">espacios con</span>
<span class="a t" id="t69" style="left:43px;top:304.27px;font: 400 11.5px/11.5px 'Liberation Sans','DejaVu Sans',sans-serif;color:#222;transform:scaleX(0.9258);">ahí-hay-ay _____es...</span>
<svg class="a" style="left:19.5px;top:331.5px;" width="17" height="15" viewBox="0 0 17 15"><path d="M5.500 0.500h7l3.500 3.500v10.500h-10.500z" fill="#fff" stroke="#777"/><path d="M12.500 0.500v3.500h3.500" fill="none" stroke="#777"/><rect x="0" y="3" width="8.500" height="8.500" fill="#2b579a"/><text x="4.250" y="10" font-family="Liberation Sans,sans-serif" font-weight="700" font-size="6.500" fill="#fff" text-anchor="middle">W</text></svg>
<div class="a" style="left:20px;top:336px;width:50px;height:36px;background:#fff;border:1px solid #8c8c8c;"></div>
<svg class="a" style="left:19.5px;top:331.5px;" width="17" height="15" viewBox="0 0 17 15"><path d="M5.500 0.500h7l3.500 3.500v10.500h-10.500z" fill="#fff" stroke="#777"/><path d="M12.500 0.500v3.500h3.500" fill="none" stroke="#777"/><rect x="0" y="3" width="8.500" height="8.500" fill="#2b579a"/><text x="4.250" y="10" font-family="Liberation Sans,sans-serif" font-weight="700" font-size="6.500" fill="#fff" text-anchor="middle">W</text></svg>
<div class="a" style="left:42.5px;top:351.5px;width:4px;height:4px;background:#111;border-radius:50%;"></div>
<span class="a t" id="t70" style="left:74.8px;top:331.97px;font: 400 11.5px/11.5px 'Liberation Sans','DejaVu Sans',sans-serif;color:#222;transform:scaleX(0.9712);">Ponga una X</span>
<span class="a t" id="t71" style="left:74.8px;top:345.17px;font: 400 11.5px/11.5px 'Liberation Sans','DejaVu Sans',sans-serif;color:#222;transform:scaleX(1.0056);">el sinónimo y</span>
<span class="a t" id="t72" style="left:74.8px;top:357.87px;font: 400 11.5px/11.5px 'Liberation Sans','DejaVu Sans',sans-serif;color:#222;transform:scaleX(1.0098);">un el antó...</span>
<svg class="a" style="left:20px;top:388px;" width="16" height="15" viewBox="0 0 16 15"><path d="M5.500 0.500h6l3.500 3.500v10.500h-9.500z" fill="#fff" stroke="#777"/><path d="M11.500 0.500v3.500h3.500" fill="none" stroke="#777"/><rect x="0.500" y="2.500" width="8" height="10" fill="#fff" stroke="#777"/><path d="M2 5.500h5M2 7.500h5M2 9.500h5" stroke="#777" stroke-width="1"/><rect x="2.500" y="1" width="4" height="2.500" fill="#777"/></svg>
<span class="a t" id="t73" style="left:43px;top:389.77px;font: 400 11.5px/11.5px 'Liberation Sans','DejaVu Sans',sans-serif;color:#222;transform:scaleX(1.0021);">https://us04web.z...</span>
<div class="a" style="left:14px;top:669px;width:74px;height:23px;background:#fdfdfd;border:1px solid #ababab;"></div>
<span class="a t" id="t74" style="left:19.5px;top:675.27px;font: 400 11.5px/11.5px 'Liberation Sans','DejaVu Sans',sans-serif;color:#444;transform:scaleX(0.9960);">Opciones</span>
<svg class="a" style="left:73.5px;top:678.5px;" width="7" height="4.5" viewBox="0 0 7 4.500"><path d="M0 0h7l-3.500 4z" fill="#444"/></svg>
<div class="a" style="left:185px;top:143px;width:23px;height:22px;background:#e4e4e4;"></div>
<div class="a" style="left:189px;top:147px;width:15px;height:14px;background:#fff;"></div>
<svg class="a" style="left:195px;top:151px;" width="5" height="6" viewBox="0 0 5 6"><path d="M1 0v5h4" fill="none" stroke="#555" stroke-width="1.600"/></svg>
<div class="a" style="left:189px;top:165px;width:14px;height:541px;background:#fff;border-left:1px solid #dadada;border-right:1px solid #dadada;"></div>
<svg class="a" style="left:190px;top:164px;" width="13" height="542" viewBox="0 0 13 542"><path d="M4.0 7.5h5" stroke="#8a8a8a" stroke-width="1"/><path d="M5.5 17.0h2" stroke="#8a8a8a" stroke-width="1"/><text transform="translate(10.300 26.4) rotate(-90)" text-anchor="middle" font-family="Liberation Sans,sans-serif" font-size="10" fill="#444">7</text><path d="M5.5 35.8h2" stroke="#8a8a8a" stroke-width="1"/><path d="M4.0 45.3h5" stroke="#8a8a8a" stroke-width="1"/><path d="M5.5 54.8h2" stroke="#8a8a8a" stroke-width="1"/><text transform="translate(10.300 64.2) rotate(-90)" text-anchor="middle" font-family="Liberation Sans,sans-serif" font-size="10" fill="#444">8</text><path d="M5.5 73.6h2" stroke="#8a8a8a" stroke-width="1"/><path d="M4.0 83.1h5" stroke="#8a8a8a" stroke-width="1"/><path d="M5.5 92.6h2" stroke="#8a8a8a" stroke-width="1"/><text transform="translate(10.300 102.0) rotate(-90)" text-anchor="middle" font-family="Liberation Sans,sans-serif" font-size="10" fill="#444">9</text><path d="M5.5 111.4h2" stroke="#8a8a8a" stroke-width="1"/><path d="M4.0 120.9h5" stroke="#8a8a8a" stroke-width="1"/><path d="M5.5 130.4h2" stroke="#8a8a8a" stroke-width="1"/><text transform="translate(10.300 139.8) rotate(-90)" text-anchor="middle" font-family="Liberation Sans,sans-serif" font-size="10" fill="#444">10</text><path d="M5.5 149.2h2" stroke="#8a8a8a" stroke-width="1"/><path d="M4.0 158.7h5" stroke="#8a8a8a" stroke-width="1"/><path d="M5.5 168.2h2" stroke="#8a8a8a" stroke-width="1"/><text transform="translate(10.300 177.6) rotate(-90)" text-anchor="middle" font-family="Liberation Sans,sans-serif" font-size="10" fill="#444">11</text><path d="M5.5 187.1h2" stroke="#8a8a8a" stroke-width="1"/><path d="M4.0 196.5h5" stroke="#8a8a8a" stroke-width="1"/><path d="M5.5 206.0h2" stroke="#8a8a8a" stroke-width="1"/><text transform="translate(10.300 215.4) rotate(-90)" text-anchor="middle" font-family="Liberation Sans,sans-serif" font-size="10" fill="#444">12</text><path d="M5.5 224.8h2" stroke="#8a8a8a" stroke-width="1"/><path d="M4.0 234.3h5" stroke="#8a8a8a" stroke-width="1"/><path d="M5.5 243.8h2" stroke="#8a8a8a" stroke-width="1"/><text transform="translate(10.300 253.2) rotate(-90)" text-anchor="middle" font-family="Liberation Sans,sans-serif" font-size="10" fill="#444">13</text><path d="M5.5 262.6h2" stroke="#8a8a8a" stroke-width="1"/><path d="M4.0 272.1h5" stroke="#8a8a8a" stroke-width="1"/><path d="M5.5 281.6h2" stroke="#8a8a8a" stroke-width="1"/><text transform="translate(10.300 291.0) rotate(-90)" text-anchor="middle" font-family="Liberation Sans,sans-serif" font-size="10" fill="#444">14</text><path d="M5.5 300.4h2" stroke="#8a8a8a" stroke-width="1"/><path d="M4.0 309.9h5" stroke="#8a8a8a" stroke-width="1"/><path d="M5.5 319.4h2" stroke="#8a8a8a" stroke-width="1"/><text transform="translate(10.300 328.8) rotate(-90)" text-anchor="middle" font-family="Liberation Sans,sans-serif" font-size="10" fill="#444">15</text><path d="M5.5 338.2h2" stroke="#8a8a8a" stroke-width="1"/><path d="M4.0 347.7h5" stroke="#8a8a8a" stroke-width="1"/><path d="M5.5 357.1h2" stroke="#8a8a8a" stroke-width="1"/><text transform="translate(10.300 366.6) rotate(-90)" text-anchor="middle" font-family="Liberation Sans,sans-serif" font-size="10" fill="#444">16</text><path d="M5.5 376.1h2" stroke="#8a8a8a" stroke-width="1"/><path d="M4.0 385.5h5" stroke="#8a8a8a" stroke-width="1"/><path d="M5.5 395.0h2" stroke="#8a8a8a" stroke-width="1"/><text transform="translate(10.300 404.4) rotate(-90)" text-anchor="middle" font-family="Liberation Sans,sans-serif" font-size="10" fill="#444">17</text><path d="M5.5 413.9h2" stroke="#8a8a8a" stroke-width="1"/><path d="M4.0 423.3h5" stroke="#8a8a8a" stroke-width="1"/><path d="M5.5 432.8h2" stroke="#8a8a8a" stroke-width="1"/><text transform="translate(10.300 442.2) rotate(-90)" text-anchor="middle" font-family="Liberation Sans,sans-serif" font-size="10" fill="#444">18</text><path d="M5.5 451.6h2" stroke="#8a8a8a" stroke-width="1"/><path d="M4.0 461.1h5" stroke="#8a8a8a" stroke-width="1"/><path d="M5.5 470.5h2" stroke="#8a8a8a" stroke-width="1"/><text transform="translate(10.300 480.0) rotate(-90)" text-anchor="middle" font-family="Liberation Sans,sans-serif" font-size="10" fill="#444">19</text><path d="M5.5 489.5h2" stroke="#8a8a8a" stroke-width="1"/><path d="M4.0 498.9h5" stroke="#8a8a8a" stroke-width="1"/><path d="M5.5 508.4h2" stroke="#8a8a8a" stroke-width="1"/><text transform="translate(10.300 517.8) rotate(-90)" text-anchor="middle" font-family="Liberation Sans,sans-serif" font-size="10" fill="#444">20</text><path d="M5.5 527.2h2" stroke="#8a8a8a" stroke-width="1"/><path d="M4.0 536.7h5" stroke="#8a8a8a" stroke-width="1"/></svg>
<div class="a" style="left:381px;top:147px;width:794px;height:11px;background:#fff;"></div>
<div class="a" style="left:381px;top:147px;width:76px;height:11px;background:#d9d9d9;"></div>
<div class="a" style="left:1099px;top:147px;width:76px;height:11px;background:#d9d9d9;"></div>
<svg class="a" style="left:381px;top:147px;" width="794" height="11" viewBox="0 0 794 11"><text x="0.9" y="9.300" text-anchor="middle" font-family="Liberation Sans,sans-serif" font-size="9.800" fill="#505050">2</text><path d="M9.3 4.75v1.5" stroke="#909090" stroke-width="1"/><path d="M18.8 3.5v4" stroke="#909090" stroke-width="1"/><path d="M28.2 4.75v1.5" stroke="#909090" stroke-width="1"/><text x="37.7" y="9.300" text-anchor="middle" font-family="Liberation Sans,sans-serif" font-size="9.800" fill="#505050">1</text><path d="M47.1 4.75v1.5" stroke="#909090" stroke-width="1"/><path d="M56.6 3.5v4" stroke="#909090" stroke-width="1"/><path d="M66.1 4.75v1.5" stroke="#909090" stroke-width="1"/><path d="M84.9 4.75v1.5" stroke="#909090" stroke-width="1"/><path d="M94.4 3.5v4" stroke="#909090" stroke-width="1"/><path d="M103.9 4.75v1.5" stroke="#909090" stroke-width="1"/><text x="113.3" y="9.300" text-anchor="middle" font-family="Liberation Sans,sans-serif" font-size="9.800" fill="#505050">1</text><path d="M122.8 4.75v1.5" stroke="#909090" stroke-width="1"/><path d="M132.2 3.5v4" stroke="#909090" stroke-width="1"/><path d="M141.6 4.75v1.5" stroke="#909090" stroke-width="1"/><text x="151.1" y="9.300" text-anchor="middle" font-family="Liberation Sans,sans-serif" font-size="9.800" fill="#505050">2</text><path d="M160.6 4.75v1.5" stroke="#909090" stroke-width="1"/><path d="M170.0 3.5v4" stroke="#909090" stroke-width="1"/><path d="M179.5 4.75v1.5" stroke="#909090" stroke-width="1"/><text x="188.9" y="9.300" text-anchor="middle" font-family="Liberation Sans,sans-serif" font-size="9.800" fill="#505050">3</text><path d="M198.4 4.75v1.5" stroke="#909090" stroke-width="1"/><path d="M207.8 3.5v4" stroke="#909090" stroke-width="1"/><path d="M217.2 4.75v1.5" stroke="#909090" stroke-width="1"/><text x="226.7" y="9.300" text-anchor="middle" font-family="Liberation Sans,sans-serif" font-size="9.800" fill="#505050">4</text><path d="M236.2 4.75v1.5" stroke="#909090" stroke-width="1"/><path d="M245.6 3.5v4" stroke="#909090" stroke-width="1"/><path d="M255.1 4.75v1.5" stroke="#909090" stroke-width="1"/><text x="264.5" y="9.300" text-anchor="middle" font-family="Liberation Sans,sans-serif" font-size="9.800" fill="#505050">5</text><path d="M274.0 4.75v1.5" stroke="#909090" stroke-width="1"/><path d="M283.4 3.5v4" stroke="#909090" stroke-width="1"/><path d="M292.9 4.75v1.5" stroke="#909090" stroke-width="1"/><text x="302.3" y="9.300" text-anchor="middle" font-family="Liberation Sans,sans-serif" font-size="9.800" fill="#505050">6</text><path d="M311.8 4.75v1.5" stroke="#909090" stroke-width="1"/><path d="M321.2 3.5v4" stroke="#909090" stroke-width="1"/><path d="M330.6 4.75v1.5" stroke="#909090" stroke-width="1"/><text x="340.1" y="9.300" text-anchor="middle" font-family="Liberation Sans,sans-serif" font-size="9.800" fill="#505050">7</text><path d="M349.5 4.75v1.5" stroke="#909090" stroke-width="1"/><path d="M359.0 3.5v4" stroke="#909090" stroke-width="1"/><path d="M368.4 4.75v1.5" stroke="#909090" stroke-width="1"/><text x="377.9" y="9.300" text-anchor="middle" font-family="Liberation Sans,sans-serif" font-size="9.800" fill="#505050">8</text><path d="M387.4 4.75v1.5" stroke="#909090" stroke-width="1"/><path d="M396.8 3.5v4" stroke="#909090" stroke-width="1"/><path d="M406.2 4.75v1.5" stroke="#909090" stroke-width="1"/><text x="415.7" y="9.300" text-anchor="middle" font-family="Liberation Sans,sans-serif" font-size="9.800" fill="#505050">9</text><path d="M425.2 4.75v1.5" stroke="#909090" stroke-width="1"/><path d="M434.6 3.5v4" stroke="#909090" stroke-width="1"/><path d="M444.1 4.75v1.5" stroke="#909090" stroke-width="1"/><text x="453.5" y="9.300" text-anchor="middle" font-family="Liberation Sans,sans-serif" font-size="9.800" fill="#505050">10</text><path d="M463.0 4.75v1.5" stroke="#909090" stroke-width="1"/><path d="M472.4 3.5v4" stroke="#909090" stroke-width="1"/><path d="M481.9 4.75v1.5" stroke="#909090" stroke-width="1"/><text x="491.3" y="9.300" text-anchor="middle" font-family="Liberation Sans,sans-serif" font-size="9.800" fill="#505050">11</text><path d="M500.8 4.75v1.5" stroke="#909090" stroke-width="1"/><path d="M510.2 3.5v4" stroke="#909090" stroke-width="1"/><path d="M519.6 4.75v1.5" stroke="#909090" stroke-width="1"/><text x="529.1" y="9.300" text-anchor="middle" font-family="Liberation Sans,sans-serif" font-size="9.800" fill="#505050">12</text><path d="M538.5 4.75v1.5" stroke="#909090" stroke-width="1"/><path d="M548.0 3.5v4" stroke="#909090" stroke-width="1"/><path d="M557.4 4.75v1.5" stroke="#909090" stroke-width="1"/><text x="566.9" y="9.300" text-anchor="middle" font-family="Liberation Sans,sans-serif" font-size="9.800" fill="#505050">13</text><path d="M576.4 4.75v1.5" stroke="#909090" stroke-width="1"/><path d="M585.8 3.5v4" stroke="#909090" stroke-width="1"/><path d="M595.2 4.75v1.5" stroke="#909090" stroke-width="1"/><text x="604.7" y="9.300" text-anchor="middle" font-family="Liberation Sans,sans-serif" font-size="9.800" fill="#505050">14</text><path d="M614.1 4.75v1.5" stroke="#909090" stroke-width="1"/><path d="M623.6 3.5v4" stroke="#909090" stroke-width="1"/><path d="M633.0 4.75v1.5" stroke="#909090" stroke-width="1"/><text x="642.5" y="9.300" text-anchor="middle" font-family="Liberation Sans,sans-serif" font-size="9.800" fill="#505050">15</text><path d="M652.0 4.75v1.5" stroke="#909090" stroke-width="1"/><path d="M661.4 3.5v4" stroke="#909090" stroke-width="1"/><path d="M670.8 4.75v1.5" stroke="#909090" stroke-width="1"/><text x="680.3" y="9.300" text-anchor="middle" font-family="Liberation Sans,sans-serif" font-size="9.800" fill="#505050">16</text><path d="M689.8 4.75v1.5" stroke="#909090" stroke-width="1"/><path d="M699.2 3.5v4" stroke="#909090" stroke-width="1"/><path d="M708.6 4.75v1.5" stroke="#909090" stroke-width="1"/><path d="M727.5 4.75v1.5" stroke="#909090" stroke-width="1"/><path d="M737.0 3.5v4" stroke="#909090" stroke-width="1"/><path d="M746.4 4.75v1.5" stroke="#909090" stroke-width="1"/><text x="755.9" y="9.300" text-anchor="middle" font-family="Liberation Sans,sans-serif" font-size="9.800" fill="#505050">18</text><path d="M765.4 4.75v1.5" stroke="#909090" stroke-width="1"/><path d="M774.8 3.5v4" stroke="#909090" stroke-width="1"/><path d="M784.2 4.75v1.5" stroke="#909090" stroke-width="1"/></svg>
<svg class="a" style="left:464px;top:145px;" width="10" height="22" viewBox="0 0 10 22"><path d="M0.500 0.500h9l-4.500 6.500z" fill="#fff" stroke="#777"/><path d="M0.500 13.500l4.500-6.500l4.500 6.500z" fill="#fff" stroke="#777"/><rect x="0.500" y="14.500" width="9" height="6.500" fill="#fff" stroke="#777"/></svg>
<svg class="a" style="left:1094px;top:152px;" width="10" height="8" viewBox="0 0 10 8"><path d="M0.500 7.500v-3l4.500-4l4.500 4v3z" fill="#fff" stroke="#777"/></svg>
<div class="a" style="left:1350px;top:143px;width:16px;height:563px;background:#ebebeb;"></div>
<div class="a" style="left:1350px;top:145px;width:15px;height:15px;background:#fff;border:1px solid #ababab;"></div>
<svg class="a" style="left:1354px;top:150px;" width="7" height="5" viewBox="0 0 7 5"><path d="M0 4.500h7l-3.500-4.500z" fill="#666"/></svg>
<div class="a" style="left:1350px;top:194px;width:15px;height:62px;background:#fff;border:1px solid #ababab;"></div>
<div class="a" style="left:1350px;top:689px;width:15px;height:15px;background:#fff;border:1px solid #ababab;"></div>
<svg class="a" style="left:1354px;top:694.5px;" width="7" height="5" viewBox="0 0 7 5"><path d="M0 0h7l-3.500 4.500z" fill="#666"/></svg>
<div class="a" style="left:383px;top:167px;width:792px;height:539px;background:#fff;border-left:1px solid #c3c3c3;border-right:1px solid #c3c3c3;"></div>
<div class="a" style="left:460px;top:167px;width:200px;height:12px;overflow:hidden;"><span class="a t" style="left:10.400px;top:-5.900px;font:700 16px/16px 'Liberation Serif','DejaVu Serif',serif;color:#000;transform:scaleX(1.003)">INSTRUCCIONES:</span></div>
<div class="a" style="left:609px;top:167px;width:1px;height:9px;background:#000;"></div>
<div class="a" style="left:446.7px;top:188.9px;width:6.2px;height:6.2px;background:#000;border-radius:50%;"></div>
<span class="a t" id="t75" style="left:470.5px;top:183.10px;font: 400 16px/16px 'Liberation Serif','DejaVu Serif',serif;color:#000;transform:scaleX(0.9929);">Lea detenidamente cada pregunta.</span>
<div class="a" style="left:446.7px;top:211.4px;width:6.2px;height:6.2px;background:#000;border-radius:50%;"></div>
<span class="a t" id="t76" style="left:470.5px;top:205.60px;font: 400 16px/16px 'Liberation Serif','DejaVu Serif',serif;color:#000;transform:scaleX(0.9967);">Para contestar las preguntas utilice buena letra y sin faltas ortográficas.</span>
<div class="a" style="left:446.7px;top:233.9px;width:6.2px;height:6.2px;background:#000;border-radius:50%;"></div>
<span class="a t" id="t77" style="left:470.5px;top:228.10px;font: 400 16px/16px 'Liberation Serif','DejaVu Serif',serif;color:#000;transform:scaleX(0.9988);">Antes de entregar el Instrumento de Evaluación, revise que todas las preguntas hayan sido</span>
<span class="a t" id="t78" style="left:470.5px;top:248.60px;font: 400 16px/16px 'Liberation Serif','DejaVu Serif',serif;color:#000;transform:scaleX(0.9775);">Contestadas.</span>
<div class="a" style="left:458px;top:274px;width:622px;height:52px;background:#fff;border:1px solid #9bb865;"></div>
<span class="a t" id="t79" style="left:468.4px;top:282.00px;font: 400 13px/13px 'Liberation Sans','DejaVu Sans',sans-serif;color:#000;transform:scaleX(1.0526);">•Objetivo: Identificar aprendizajes previos de los estudiantes sobre lectura comprensiva, ortografía,</span>
<span class="a t" id="t80" style="left:468.4px;top:300.00px;font: 400 13px/13px 'Liberation Sans','DejaVu Sans',sans-serif;color:#000;transform:scaleX(1.0209);">análisis de textos, para el nuevo aprendizaje.</span>
<span class="a t" id="t81" style="left:459px;top:333.90px;font: 400 16px/16px 'Liberation Serif','DejaVu Serif',serif;color:#000;">1.-Ponga una </span>
<span class="a t" id="t82" style="left:547px;top:333.90px;font: 700 16px/16px 'Liberation Serif','DejaVu Serif',serif;color:#000;transform:scaleX(0.9514);">X</span>
<span class="a t" id="t83" style="left:558px;top:333.90px;font: 400 16px/16px 'Liberation Serif','DejaVu Serif',serif;color:#000;"> el sinónimo y un </span>
<div class="a" style="left:673.5px;top:334.8px;width:11.6px;height:11.6px;background:#000;border-radius:50%;"></div>
<span class="a t" id="t84" style="left:689px;top:333.90px;font: 400 16px/16px 'Liberation Serif','DejaVu Serif',serif;color:#000;transform:scaleX(0.9977);">el antónimo de las siguientes palabras.</span>
<svg class="a" style="left:470px;top:361.5px;" width="13" height="12" viewBox="0 0 11 11"><rect x="0.500" y="0.500" width="10" height="10" fill="#fff" stroke="#8a8a8a"/><path d="M5.500 2v7M2 5.500h7" stroke="#555" stroke-width="1"/><path d="M5.500 1l1.500 2h-3zM5.500 10l1.500-2h-3zM1 5.500l2-1.500v3zM10 5.500l-2-1.500v3z" fill="#555"/></svg>
<div class="a" style="left:484px;top:374px;width:113px;height:165px;background:#ccc0da;"></div>
<div class="a" style="left:483px;top:374px;width:1px;height:165px;background:#000;"></div>
<div class="a" style="left:597px;top:374px;width:1px;height:165px;background:#000;"></div>
<div class="a" style="left:710px;top:374px;width:1px;height:165px;background:#000;"></div>
<div class="a" style="left:833px;top:374px;width:1px;height:165px;background:#000;"></div>
<div class="a" style="left:947px;top:374px;width:1px;height:165px;background:#000;"></div>
<div class="a" style="left:1060px;top:374px;width:1px;height:165px;background:#000;"></div>
<div class="a" style="left:483px;top:374px;width:578px;height:1px;background:#000;"></div>
<div class="a" style="left:483px;top:407px;width:578px;height:1px;background:#000;"></div>
<div class="a" style="left:483px;top:440px;width:578px;height:1px;background:#000;"></div>
<div class="a" style="left:483px;top:473px;width:578px;height:1px;background:#000;"></div>
<div class="a" style="left:483px;top:505px;width:578px;height:1px;background:#000;"></div>
<div class="a" style="left:483px;top:538px;width:578px;height:1px;background:#000;"></div>
<span class="a t" id="t85" style="left:492.2px;top:377.36px;font: 400 18.67px/18.67px 'Liberation Serif','DejaVu Serif',serif;color:#000;">alegre</span>
<span class="a t" id="t86" style="left:605.2px;top:377.36px;font: 400 18.67px/18.67px 'Liberation Serif','DejaVu Serif',serif;color:#000;">rápido</span>
<span class="a t" id="t87" style="left:718.6px;top:377.36px;font: 400 18.67px/18.67px 'Liberation Serif','DejaVu Serif',serif;color:#000;">feliz</span>
<span class="a t" id="t88" style="left:841.8px;top:377.36px;font: 400 18.67px/18.67px 'Liberation Serif','DejaVu Serif',serif;color:#000;">inteligente</span>
<span class="a t" id="t89" style="left:955.8px;top:377.36px;font: 400 18.67px/18.67px 'Liberation Serif','DejaVu Serif',serif;color:#000;">triste</span>
<span class="a t" id="t90" style="left:492.2px;top:410.21px;font: 400 18.67px/18.67px 'Liberation Serif','DejaVu Serif',serif;color:#000;">barato</span>
<span class="a t" id="t91" style="left:605.2px;top:410.21px;font: 400 18.67px/18.67px 'Liberation Serif','DejaVu Serif',serif;color:#000;">caro</span>
<span class="a t" id="t92" style="left:718.6px;top:410.21px;font: 400 18.67px/18.67px 'Liberation Serif','DejaVu Serif',serif;color:#000;">útil</span>
<span class="a t" id="t93" style="left:841.8px;top:410.21px;font: 400 18.67px/18.67px 'Liberation Serif','DejaVu Serif',serif;color:#000;">económico</span>
<span class="a t" id="t94" style="left:955.8px;top:410.21px;font: 400 18.67px/18.67px 'Liberation Serif','DejaVu Serif',serif;color:#000;">caliente</span>
<span class="a t" id="t95" style="left:492.2px;top:443.06px;font: 400 18.67px/18.67px 'Liberation Serif','DejaVu Serif',serif;color:#000;">cómodo</span>
<span class="a t" id="t96" style="left:605.2px;top:443.06px;font: 400 18.67px/18.67px 'Liberation Serif','DejaVu Serif',serif;color:#000;">confortable</span>
<span class="a t" id="t97" style="left:718.6px;top:443.06px;font: 400 18.67px/18.67px 'Liberation Serif','DejaVu Serif',serif;color:#000;">incómodo</span>
<span class="a t" id="t98" style="left:841.8px;top:443.06px;font: 400 18.67px/18.67px 'Liberation Serif','DejaVu Serif',serif;color:#000;">alto</span>
<span class="a t" id="t99" style="left:955.8px;top:443.06px;font: 400 18.67px/18.67px 'Liberation Serif','DejaVu Serif',serif;color:#000;">soberbio</span>
<span class="a t" id="t100" style="left:492.2px;top:475.91px;font: 400 18.67px/18.67px 'Liberation Serif','DejaVu Serif',serif;color:#000;">sano</span>
<span class="a t" id="t101" style="left:605.2px;top:475.91px;font: 400 18.67px/18.67px 'Liberation Serif','DejaVu Serif',serif;color:#000;">simpático</span>
<span class="a t" id="t102" style="left:718.6px;top:475.91px;font: 400 18.67px/18.67px 'Liberation Serif','DejaVu Serif',serif;color:#000;">enfermizo</span>
<span class="a t" id="t103" style="left:841.8px;top:475.91px;font: 400 18.67px/18.67px 'Liberation Serif','DejaVu Serif',serif;color:#000;">delgado</span>
<span class="a t" id="t104" style="left:955.8px;top:475.91px;font: 400 18.67px/18.67px 'Liberation Serif','DejaVu Serif',serif;color:#000;">saludable</span>
<span class="a t" id="t105" style="left:492.2px;top:508.76px;font: 400 18.67px/18.67px 'Liberation Serif','DejaVu Serif',serif;color:#000;">nervioso</span>
<span class="a t" id="t106" style="left:605.2px;top:508.76px;font: 400 18.67px/18.67px 'Liberation Serif','DejaVu Serif',serif;color:#000;">tranquilo</span>
<span class="a t" id="t107" style="left:718.6px;top:508.76px;font: 400 18.67px/18.67px 'Liberation Serif','DejaVu Serif',serif;color:#000;">cruel</span>
<span class="a t" id="t108" style="left:841.8px;top:508.76px;font: 400 18.67px/18.67px 'Liberation Serif','DejaVu Serif',serif;color:#000;">cariñoso</span>
<span class="a t" id="t109" style="left:955.8px;top:508.76px;font: 400 18.67px/18.67px 'Liberation Serif','DejaVu Serif',serif;color:#000;">impaciente</span>
<div class="a" style="left:1062px;top:540px;width:7px;height:7px;background:#fff;border:1px solid #8a8a8a;"></div>
<span class="a t" id="t110" style="left:458px;top:570.60px;font: 700 16px/16px 'Liberation Serif','DejaVu Serif',serif;color:#000;transform:scaleX(0.9994);">2.-En el siguiente texto ubique la tilde  solo en las palabras que corresponda.</span>
<div class="a" style="left:457px;top:606px;width:643px;height:100px;background:#fff;border:1px solid #000;border-bottom:none;"></div>
<div class="a" style="left:457px;top:606.5px;width:643px;height:99.5px;overflow:hidden;"><span class="a t" id="t111" style="left:9px;top:3.98px;font:400 14.67px/14.67px 'Liberation Sans','DejaVu Sans',sans-serif;color:#111;transform:scaleX(1.0);word-spacing:0.215px;">Coloca las tildes que faltan en el siguiente texto. <span style="text-decoration:underline wavy #e03030;text-decoration-thickness:1px;text-underline-offset:1px;text-decoration-skip-ink:none">Amanecio</span> con una llovizna <span style="text-decoration:underline wavy #e03030;text-decoration-thickness:1px;text-underline-offset:1px;text-decoration-skip-ink:none">aspera</span> que <span style="text-decoration:underline wavy #e03030;text-decoration-thickness:1px;text-underline-offset:1px;text-decoration-skip-ink:none">caia</span> del</span><span class="a t" id="t112" style="left:9px;top:33.48px;font:400 14.67px/14.67px 'Liberation Sans','DejaVu Sans',sans-serif;color:#111;transform:scaleX(1.0);word-spacing:2.134px;">cielo. <span style="text-decoration:underline wavy #3a5fd0;text-decoration-thickness:1px;text-underline-offset:1px;text-decoration-skip-ink:none">Hacia</span> mucho frio y <span style="text-decoration:underline wavy #e03030;text-decoration-thickness:1px;text-underline-offset:1px;text-decoration-skip-ink:none">teniamos</span> la nariz congelada. <span style="text-decoration:underline wavy #e03030;text-decoration-thickness:1px;text-underline-offset:1px;text-decoration-skip-ink:none">Ibamos</span> hacia la parada de <span style="text-decoration:underline wavy #e03030;text-decoration-thickness:1px;text-underline-offset:1px;text-decoration-skip-ink:none">autobus</span> y</span><span class="a t" id="t113" style="left:9px;top:63.28px;font:400 14.67px/14.67px 'Liberation Sans','DejaVu Sans',sans-serif;color:#111;transform:scaleX(1.0);word-spacing:-0.046px;"><span style="text-decoration:underline wavy #e03030;text-decoration-thickness:1px;text-underline-offset:1px;text-decoration-skip-ink:none">recorde</span> que <span style="text-decoration:underline wavy #e03030;text-decoration-thickness:1px;text-underline-offset:1px;text-decoration-skip-ink:none">habia</span> olvidado mi <span style="text-decoration:underline wavy #e03030;text-decoration-thickness:1px;text-underline-offset:1px;text-decoration-skip-ink:none">pantalon</span> de montaña. Mi profesora de <span style="text-decoration:underline wavy #e03030;text-decoration-thickness:1px;text-underline-offset:1px;text-decoration-skip-ink:none">esqui</span> también llevaba ropa</span><span class="a t" id="t114" style="left:9px;top:92.88px;font:400 14.67px/14.67px 'Liberation Sans','DejaVu Sans',sans-serif;color:#111;transform:scaleX(1.0);word-spacing:0.345px;">para nosotros, asi que no habia problema. Alvaro iba el ultimo porque fisicamente era mas debil</span></div>
<span class="a t" id="t115" style="left:7px;top:711.69px;font: 400 11px/11px 'Liberation Sans','DejaVu Sans',sans-serif;color:#fff;transform:scaleX(0.9400);">PÁGINA 1 DE 4</span>
<span class="a t" id="t116" style="left:99px;top:711.69px;font: 400 11px/11px 'Liberation Sans','DejaVu Sans',sans-serif;color:#fff;transform:scaleX(0.9081);">1359 PALABRAS</span>
<svg class="a" style="left:196px;top:710px;" width="15" height="13" viewBox="0 0 15 13"><path d="M0.500 1.500c2-1 4.500-1 6 0.500v10c-1.500-1.500-4-1.500-6-0.500zM6.500 2c1-1 2-1.200 3-1.200" fill="none" stroke="#fff" stroke-width="1.100"/><path d="M9 4l5 5M14 4l-5 5" stroke="#fff" stroke-width="1.400"/></svg>
<span class="a t" id="t117" style="left:227.5px;top:711.69px;font: 400 11px/11px 'Liberation Sans','DejaVu Sans',sans-serif;color:#fff;transform:scaleX(0.8862);">ESPAÑOL (ESPAÑA)</span>
<svg class="a" style="left:354px;top:710px;" width="14" height="13" viewBox="0 0 14 13"><circle cx="3" cy="2.800" r="2.600" fill="#fff"/><rect x="6.500" y="1" width="7" height="3" fill="#fff"/><rect x="0" y="5" width="13.500" height="8" fill="#fff"/><path d="M0 7.500h13.500M0 10.500h13.500M3.500 5v8M6.500 5v8M9.500 5v8" stroke="#2b579a" stroke-width="1"/></svg>
<svg class="a" style="left:1083px;top:710px;" width="14" height="14" viewBox="0 0 14 14"><path d="M0.500 0.500h5.500l1 1l1-1h5.500v10h-5.500l-1 2l-1-2h-5.500z" fill="none" stroke="#fff" stroke-width="1"/><path d="M7 1.500v10" stroke="#fff"/><path d="M2 2.500h4M2 4.500h4M2 6.500h4M2 8.500h4M8 2.500h4M8 4.500h4M8 6.500h4M8 8.500h4" stroke="#fff" stroke-width="1"/></svg>
<div class="a" style="left:1109px;top:706px;width:38px;height:22px;background:#214a8c;"></div>
<svg class="a" style="left:1121px;top:710px;" width="15" height="14" viewBox="0 0 15 14"><rect x="0.500" y="0.500" width="14" height="13" fill="none" stroke="#fff" stroke-width="1"/><path d="M2 3.500h11M2 5.500h11M2 7.500h11M2 9.500h11M2 11.500h11" stroke="#fff" stroke-width="1"/></svg>
<svg class="a" style="left:1159px;top:710px;" width="16" height="15" viewBox="0 0 16 15"><path d="M0.500 11.500v-11h11v5" fill="none" stroke="#fff"/><path d="M0.500 11.500h6" stroke="#fff"/><path d="M2 2.500h8M2 4.500h8M2 6.500h5M2 8.500h4" stroke="#fff" stroke-width="1"/><circle cx="10.800" cy="10.300" r="4.200" fill="#e4ebf6"/><path d="M8.500 8.500l2-1l1.500 1.500l-1.500 2l-1.500-0.500zM12 11l1.500-1l0.500 1.500l-1.500 1.500z" fill="#2b579a"/></svg>
<div class="a" style="left:1190px;top:716.5px;width:6px;height:2px;background:#fff;"></div>
<div class="a" style="left:1200px;top:717px;width:100px;height:1px;background:#fff;"></div>
<div class="a" style="left:1248px;top:709px;width:4px;height:16px;background:#fff;"></div>
<div class="a" style="left:1304.5px;top:716.5px;width:8px;height:2px;background:#fff;"></div>
<div class="a" style="left:1307.5px;top:713.5px;width:2px;height:8px;background:#fff;"></div>
<span class="a t" id="t118" style="left:1327.6px;top:712.07px;font: 400 11.5px/11.5px 'Liberation Sans','DejaVu Sans',sans-serif;color:#fff;transform:scaleX(0.9016);">100 %</span>
<svg class="a" style="left:16px;top:740px;" width="16" height="16" viewBox="0 0 16 16"><path d="M0 2.300l6.500-0.900v6.100h-6.500zM7.500 1.250l8.500-1.250v7.500h-8.500zM0 8.500h6.500v6.100l-6.500-0.900zM7.500 8.500h8.500v7.500l-8.500-1.250z" fill="#fff"/></svg>
<svg class="a" style="left:60px;top:740px;" width="17" height="17" viewBox="0 0 17 17"><circle cx="10" cy="6.500" r="5.200" fill="none" stroke="#e8e8e8" stroke-width="1.500"/><path d="M6.200 10.500l-5.500 5.800" stroke="#e8e8e8" stroke-width="1.600"/></svg>
<span class="a t" id="t119" style="left:88px;top:740.60px;font: 400 15px/15px 'Liberation Sans','DejaVu Sans',sans-serif;color:#d8d8d8;transform:scaleX(0.9654);">Escribe aquí para buscar</span>
<svg class="a" style="left:407px;top:739px;" width="18" height="18" viewBox="0 0 18 18"><circle cx="9" cy="9" r="7.200" fill="none" stroke="#fff" stroke-width="1.900"/></svg>
<svg class="a" style="left:455px;top:740px;" width="18" height="17" viewBox="0 0 18 17"><rect x="1" y="4" width="11" height="9" fill="none" stroke="#fff" stroke-width="1.400"/><path d="M1 1h11M1 16h11" stroke="#fff" stroke-width="1.400"/><path d="M16 1v3M16 6.500v10" stroke="#fff" stroke-width="1.600"/></svg>
<svg class="a" style="left:504px;top:739px;" width="22" height="18" viewBox="0 0 24 21"><path d="M0 2.500a1 1 0 0 1 1-1h7l2 2.500h13a1 1 0 0 1 1 1v14h-24z" fill="#e9a825"/><path d="M0 7h24v13a1 1 0 0 1-1 1h-22a1 1 0 0 1-1-1z" fill="#ffd766"/><path d="M5 21v-6.500a1 1 0 0 1 1-1h12a1 1 0 0 1 1 1v6.500z" fill="#3d8bd4"/><rect x="8.500" y="17" width="7" height="4" fill="#ffd766"/></svg>
<div class="a" style="left:495px;top:766px;width:40px;height:2px;background:#a5d0f3;"></div>
<svg class="a" style="left:554px;top:738.5px;" width="19.5" height="19.5" viewBox="0 0 24 24"><g transform="translate(12 12)"><rect x="-2.300" y="-11.500" width="4.600" height="6" transform="rotate(0)" fill="#fff"/><rect x="-2.300" y="-11.500" width="4.600" height="6" transform="rotate(45)" fill="#fff"/><rect x="-2.300" y="-11.500" width="4.600" height="6" transform="rotate(90)" fill="#fff"/><rect x="-2.300" y="-11.500" width="4.600" height="6" transform="rotate(135)" fill="#fff"/><rect x="-2.300" y="-11.500" width="4.600" height="6" transform="rotate(180)" fill="#fff"/><rect x="-2.300" y="-11.500" width="4.600" height="6" transform="rotate(225)" fill="#fff"/><rect x="-2.300" y="-11.500" width="4.600" height="6" transform="rotate(270)" fill="#fff"/><rect x="-2.300" y="-11.500" width="4.600" height="6" transform="rotate(315)" fill="#fff"/><circle r="7.600" fill="#fff"/><circle r="3.700" fill="#101010"/></g></svg>
<svg class="a" style="left:603px;top:736px;" width="19" height="25" viewBox="0 0 19 25"><rect x="0" y="0" width="19" height="25" rx="1.500" fill="#7c8a99"/><rect x="2.500" y="2.500" width="14" height="5.500" fill="#5fc2f0"/><g fill="#c9d2da"><rect x="2.500" y="10" width="4" height="3.800"/><rect x="7.500" y="10" width="4" height="3.800"/><rect x="12.500" y="10" width="4" height="3.800"/><rect x="2.500" y="15" width="4" height="3.800"/><rect x="7.500" y="15" width="4" height="3.800"/><rect x="2.500" y="20" width="4" height="3.800"/><rect x="7.500" y="20" width="4" height="3.800"/></g><rect x="12.500" y="15" width="4" height="8.800" fill="#2e6bb5"/></svg>
<svg class="a" style="left:649px;top:736px;" width="25" height="25" viewBox="0 0 25 25"><path d="M8 7v-3a4.500 4.500 0 0 1 9 0v3" fill="none" stroke="#f2f2f2" stroke-width="1.600"/><path d="M1 7h23l-1.500 18h-20z" fill="#f5f5f5"/><rect x="8" y="11.500" width="4" height="4" fill="#e8543a"/><rect x="13" y="11.500" width="4" height="4" fill="#7db93d"/><rect x="8" y="16.500" width="4" height="4" fill="#2fa4e8"/><rect x="13" y="16.500" width="4" height="4" fill="#f6b82c"/></svg>
<svg class="a" style="left:699px;top:736px;" width="24" height="24" viewBox="0 0 24 24"><circle cx="12" cy="12" r="11.500" fill="#e8453c"/><path d="M12 12L2.040 17.750A11.500 11.500 0 0 0 12 23.500z" fill="#2da94f"/><path d="M12 12L2.040 17.750A11.500 11.500 0 0 1 2.040 6.250z" fill="#2da94f"/><path d="M12 12l0 11.500A11.500 11.500 0 0 0 21.960 6.250z" fill="#fcc934"/><path d="M2.040 6.250A11.500 11.500 0 0 1 21.960 6.250L12 12z" fill="#e8453c"/><circle cx="12" cy="12" r="5.300" fill="#fff"/><circle cx="12" cy="12" r="4.200" fill="#4a8af4"/></svg>
<div class="a" style="left:736px;top:728px;width:48px;height:40px;background:#343434;"></div>
<div class="a" style="left:736px;top:766px;width:48px;height:2px;background:#a5d0f3;"></div>
<svg class="a" style="left:748px;top:738px;" width="24" height="21" viewBox="0 0 24 21"><rect x="10" y="1" width="13" height="19" fill="#fff"/><path d="M12 4.500h9M12 7h9M12 9.500h9M12 12h9M12 14.500h9M12 17h9" stroke="#2b579a" stroke-width="1.200"/><path d="M0 2.500l14-2.500v21l-14-2.500z" fill="#2b579a"/><text x="7" y="15" font-family="Liberation Sans,sans-serif" font-weight="700" font-size="11" fill="#fff" text-anchor="middle">W</text></svg>
<svg class="a" style="left:796px;top:737px;" width="24" height="23" viewBox="0 0 24 23"><rect x="0" y="0" width="24" height="23" rx="6.500" fill="#4a8cf7"/><rect x="4.500" y="7.500" width="10.500" height="8" rx="2" fill="#fff"/><path d="M15.500 10.500l4.500-2.800v7.600l-4.500-2.800z" fill="#fff"/></svg>
<svg class="a" style="left:846px;top:736px;" width="24" height="24" viewBox="0 0 24 24"><defs><radialGradient id="ffg" cx="0.600" cy="0.200" r="0.900"><stop offset="0" stop-color="#ffdb3a"/><stop offset="0.500" stop-color="#ff8a16"/><stop offset="1" stop-color="#e3206f"/></radialGradient></defs><path d="M12 2.500c2-1.500 3-2.500 3.500-2.500c0 2 1.500 3 3.500 4c2-1.500 2-2.500 2-3c2.500 3 3 7.500 3 10.500a11.800 11.800 0 0 1-23.600 0.500c0-3 1-5 2-6c0.500 1 1 1.500 1.500 1.500c0-2 1.500-4 3-5c0.300 1 1.500 0 5.100 0z" fill="url(#ffg)"/><circle cx="12.500" cy="13" r="5.500" fill="#7b3fc4"/><path d="M7 13c0-4 4-5.500 7-4c-2 0-3 1-3 2.500c2 0 3.500 1.500 3 3.500c-1.500 2-6 2-7-2z" fill="#a24bdc"/></svg>
<svg class="a" style="left:895px;top:736px;" width="28" height="28" viewBox="0 0 28 28"><path d="M11.500 0.500a10.500 10.500 0 0 0-9 16l-1.700 6l6-1.600a10.500 10.500 0 1 0 4.700-20.400z" fill="#e9f5ea"/><path d="M11.500 2.300a8.700 8.700 0 0 0-7.300 13.500l-1 3.400l3.500-0.900a8.700 8.700 0 1 0 4.800-16z" fill="#4ec55f"/><path d="M8.300 6.200c-1 0.500-1.500 1.900-1 3.300c0.900 2.800 3.700 5.200 6.100 5.700c1.400 0.300 2.400-0.700 2.700-1.700l-2.200-1.100l-1 1c-1.400-0.500-2.800-1.900-3.300-3.300l1-1z" fill="#fff"/><circle cx="18.700" cy="18" r="7.600" fill="#ee1c25"/><text x="18.700" y="22.300" font-family="Liberation Sans,sans-serif" font-weight="400" font-size="12" fill="#fff" text-anchor="middle">1</text></svg>
<div class="a" style="left:887px;top:766px;width:40px;height:2px;background:#a5d0f3;"></div>
<svg class="a" style="left:944px;top:736px;" width="24" height="24" viewBox="0 0 24 24"><defs><linearGradient id="edg" x1="0" y1="0" x2="1" y2="0.300"><stop offset="0" stop-color="#2f9fe0"/><stop offset="0.550" stop-color="#34b7c4"/><stop offset="1" stop-color="#56d66f"/></linearGradient><linearGradient id="edg2" x1="0" y1="0" x2="0.600" y2="1"><stop offset="0" stop-color="#2a8fdc"/><stop offset="1" stop-color="#174f9e"/></linearGradient></defs><circle cx="12" cy="12" r="12" fill="url(#edg)"/><path d="M0.200 13.500c0.500-4.500 4.500-7 8.500-7c4 0 7 2.500 7 5.500c0 1.300-0.700 2-0.700 3c0 1.500 1.800 2.500 4 2.500c1.500 0 3-0.500 4.200-1.500c-1.700 4.700-6 8-11.200 8c-6.500 0-12-4.500-11.800-10.500z" fill="url(#edg2)"/><path d="M10 23.800c-3-1.500-4.800-4.500-4.800-7.500c0-3 2-5.300 4.500-5.800c1.500-0.300 3 0.300 3.500 1.300c-2 0.500-2.700 2.500-2.200 4.500c0.800 3 4 4.500 7 4c-2 2.300-5 3.700-8 3.500z" fill="#1b5aa8"/><path d="M9.700 10.500c1.500-0.300 3 0.300 3.500 1.300c-0.500 0.600-0.700 1.500-0.200 2.700c-1.500-0.500-2.700-2.500-3.300-4z" fill="#0f2f5c" opacity="0.800"/></svg>
<div class="a" style="left:936px;top:766px;width:40px;height:2px;background:#a5d0f3;"></div>
<svg class="a" style="left:993.5px;top:736px;" width="23.5" height="23.5" viewBox="0 0 24 24"><circle cx="12" cy="12" r="12" fill="#f08a1c"/><path d="M5 2.300a12 12 0 0 1 18.500 6.200l-8 1z" fill="#7a4fd2"/><path d="M23.500 8.500a12 12 0 0 1-13.500 15.300l7-9z" fill="#f6c22a"/><path d="M4 7.500c3-1.200 7-2 11.500-1.500c3.500 0.500 5 1.500 5.500 2.500c-0.300 4-3 9-9.500 11.500c-4.500-2.500-7.500-7-7.500-12.500z" fill="#fff"/><circle cx="11.800" cy="10.800" r="1.700" fill="#2e2356"/><path d="M11 11h1.600l0.500 3.800h-2.600z" fill="#2e2356"/></svg>
<svg class="a" style="left:1066.5px;top:737.5px;" width="24" height="24" viewBox="0 0 24 24"><circle cx="11" cy="11" r="9.800" fill="#1b98d8" stroke="#eef7fc" stroke-width="1.700"/><text x="10.500" y="16.800" font-family="Liberation Sans,sans-serif" font-weight="700" font-size="16" fill="#fff" text-anchor="middle">?</text><circle cx="18.500" cy="15.800" r="4.700" fill="#f0a323"/><rect x="17.800" y="12.700" width="1.500" height="4" fill="#fff"/><rect x="17.800" y="17.500" width="1.500" height="1.500" fill="#fff"/></svg>
<svg class="a" style="left:1098.5px;top:744px;" width="13" height="8" viewBox="0 0 13 8"><path d="M1 7l5.500-5.500l5.500 5.500" fill="none" stroke="#fff" stroke-width="1.400"/></svg>
<svg class="a" style="left:1121px;top:741.5px;" width="17" height="12" viewBox="0 0 17 12"><rect x="5.500" y="3.500" width="10" height="7" fill="none" stroke="#fff" stroke-width="1.200"/><path d="M16.300 5.500v3" stroke="#fff" stroke-width="1.400"/><path d="M1.800 0.500v2.500M4.200 0.500v2.500M0.800 3h4.400v2a2.200 2.200 0 0 1-4.400 0zM3 7.200v3.300h2.500" fill="none" stroke="#fff" stroke-width="1.100"/></svg>
<svg class="a" style="left:1146px;top:740.5px;" width="15" height="16" viewBox="0 0 15 16"><path d="M6.700 0.300l6.400 2.200v4.500c0 3.500-3 6-6.400 7.500c-3.400-1.500-6.400-4-6.400-7.500v-4.500z" fill="#fff"/><path d="M6.700 0v14.500M0 6.500h13.400" stroke="#101010" stroke-width="1.200"/><circle cx="10.600" cy="11.500" r="4.100" fill="#23a455"/><path d="M8.600 11.500l1.500 1.500l2.600-2.700" fill="none" stroke="#fff" stroke-width="1.300"/></svg>
<svg class="a" style="left:1169px;top:740.5px;" width="17" height="15" viewBox="0 0 17 15"><path d="M0.700 4.700h2.800l3.800-3.700v12.500l-3.800-3.700h-2.800z" fill="none" stroke="#fff" stroke-width="1.200"/><path d="M9.500 5a3.300 3.300 0 0 1 0 4.600M11.500 3a6.200 6.200 0 0 1 0 8.600M13.500 1a9.200 9.200 0 0 1 0 12.600" fill="none" stroke="#fff" stroke-width="1.100"/></svg>
<svg class="a" style="left:1195.5px;top:742.5px;" width="13" height="13" viewBox="0 0 13 13"><path d="M0.800 12a11.200 11.200 0 0 1 11.200-11.200" fill="none" stroke="#bdbdbd" stroke-width="1.300"/><path d="M4 12a8 8 0 0 1 8-8M7.200 12a4.800 4.800 0 0 1 4.800-4.800" fill="none" stroke="#fff" stroke-width="1.300"/><circle cx="11" cy="11" r="1.700" fill="#fff"/></svg>
<span class="a t" id="t120" style="left:1221.4px;top:742.14px;font: 400 12px/12px 'Liberation Sans','DejaVu Sans',sans-serif;color:#fff;transform:scaleX(0.7329);">ESP</span>
<span class="a t" id="t121" style="left:1268px;top:732.84px;font: 400 12px/12px 'Liberation Sans','DejaVu Sans',sans-serif;color:#fff;transform:scaleX(0.8491);">15:34</span>
<span class="a t" id="t122" style="left:1256px;top:750.84px;font: 400 12px/12px 'Liberation Sans','DejaVu Sans',sans-serif;color:#fff;transform:scaleX(0.9290);">13/5/2021</span>
<svg class="a" style="left:1325px;top:740px;" width="26" height="26" viewBox="0 0 26 26"><path d="M0.500 0.500h15.500v10.500h-8l-3.500 3.500v-3.500h-4z" fill="#fff"/><path d="M3 3.500h10.500M3 6h10.500M3 8.500h7" stroke="#101010" stroke-width="1"/><circle cx="15.300" cy="15.300" r="8.300" fill="#3d3d3d" stroke="#101010" stroke-width="1.200"/><text x="15.300" y="19.800" font-family="Liberation Sans,sans-serif" font-weight="700" font-size="12.500" fill="#fff" text-anchor="middle">2</text></svg>
</body></html>
